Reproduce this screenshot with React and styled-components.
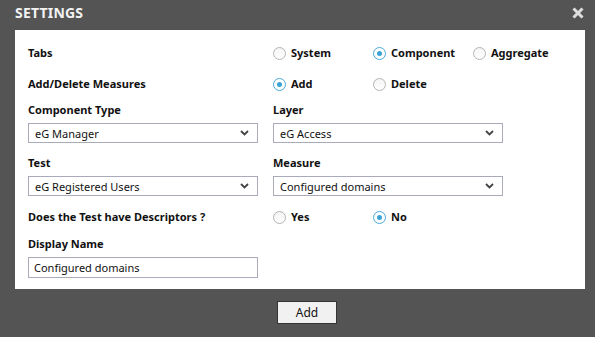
import styled, { createGlobalStyle } from "styled-components"
import { useState } from "react"

const GlobalStyle = createGlobalStyle`
  html, body {
    margin: 0;
    padding: 0;
    background: #545454;
  }
  body {
    font-family: 'Noto Sans', 'DejaVu Sans', sans-serif;
    font-size: 11px;
    color: #111;
  }
`

const Dialog = styled.div`
  width: 595px;
  height: 337px;
  background: #545454;
  box-sizing: border-box;
  padding: 0 10px 0 15px;
  display: flex;
  flex-direction: column;
`

const Header = styled.div`
  height: 30px;
  flex-shrink: 0;
  display: flex;
  align-items: center;
  justify-content: space-between;
`

const Title = styled.h1`
  margin: 0;
  font-size: 14px;
  font-weight: 700;
  color: #f2f2f2;
  letter-spacing: 0.2px;
  padding-bottom: 5px;
`

const CloseButton = styled.button`
  border: none;
  background: none;
  padding: 0;
  width: 14px;
  height: 14px;
  display: flex;
  align-items: center;
  justify-content: center;
  margin-bottom: 5px;
  cursor: pointer;
`

const Panel = styled.div`
  width: 570px;
  background: #fff;
  box-sizing: border-box;
  padding: 15px 13px 11px 13px;
  display: flex;
  flex-direction: column;
`

const Row = styled.div`
  display: grid;
  grid-template-columns: 245px 1fr;
  align-items: center;
  margin-top: ${props => props.gap || 0}px;
`

const RowLabel = styled.div`
  font-weight: 700;
  line-height: 16px;
`

const Options = styled.div`
  display: flex;
`

const Option = styled.label`
  width: 100px;
  flex-shrink: 0;
  display: flex;
  align-items: center;
  gap: 5px;
  font-weight: 700;
  line-height: 16px;
  cursor: pointer;
`

const RadioCircle = styled.span`
  width: 11px;
  height: 11px;
  border-radius: 50%;
  border: 1px solid ${props => (props.checked ? "#49a9d9" : "#b4b4b4")};
  background: ${props => (props.checked ? "#fff" : "linear-gradient(#f4f4f4, #fff)")};
  display: flex;
  align-items: center;
  justify-content: center;
  flex-shrink: 0;

  &::after {
    content: "";
    width: 5px;
    height: 5px;
    border-radius: 50%;
    background: ${props => (props.checked ? "#3aa3d6" : "transparent")};
  }
`

const Field = styled.div`
  display: flex;
  flex-direction: column;
  gap: 5px;
`

const FieldLabel = styled.div`
  font-weight: 700;
  line-height: 16px;
`

const SelectBox = styled.div`
  width: 230px;
  height: 20px;
  box-sizing: border-box;
  border: 1px solid #a9abba;
  background: #fff;
  display: flex;
  align-items: center;
  justify-content: space-between;
  padding: 0 8px 0 6px;
  cursor: pointer;
`

const TextInput = styled.input`
  width: 230px;
  height: 21px;
  box-sizing: border-box;
  border: 1px solid #a9abba;
  padding: 0 5px;
  font-family: 'Noto Sans', 'DejaVu Sans', sans-serif;
  font-size: 11px;
  color: #111;
  outline: none;
`

const Footer = styled.div`
  flex: 1;
  display: flex;
  justify-content: center;
  padding-top: 12px;
  padding-left: 14px;
`

const AddButton = styled.button`
  width: 60px;
  height: 23px;
  background: #f1f1f1;
  border: 1px solid #333;
  font-family: 'Noto Sans', 'DejaVu Sans', sans-serif;
  font-size: 12px;
  color: #111;
  padding: 0;
  cursor: pointer;
`

const Chevron = () => (
  <svg width="9" height="6" viewBox="0 0 9 6">
    <path d="M1 1 L4.5 4.5 L8 1" fill="none" stroke="#444" strokeWidth="1.8" />
  </svg>
)

const Radio = ({ label, checked, onClick }) => (
  <Option onClick={onClick}>
    <RadioCircle checked={checked} />
    {label}
  </Option>
)

const Select = ({ value }) => (
  <SelectBox>
    <span>{value}</span>
    <Chevron />
  </SelectBox>
)

const App = () => {
  const [tab, setTab] = useState("Component")
  const [mode, setMode] = useState("Add")
  const [desc, setDesc] = useState("No")
  const [name, setName] = useState("Configured domains")

  return (
    <>
      <GlobalStyle />
      <Dialog>
        <Header>
          <Title>SETTINGS</Title>
          <CloseButton aria-label="close">
            <svg width="12" height="12" viewBox="0 0 12 12">
              <path d="M1.5 1.5 L10.5 10.5 M10.5 1.5 L1.5 10.5" stroke="#dedede" strokeWidth="3" />
            </svg>
          </CloseButton>
        </Header>
        <Panel>
          <Row>
            <RowLabel>Tabs</RowLabel>
            <Options>
              {["System", "Component", "Aggregate"].map(t => (
                <Radio key={t} label={t} checked={tab === t} onClick={() => setTab(t)} />
              ))}
            </Options>
          </Row>
          <Row gap={15}>
            <RowLabel>Add/Delete Measures</RowLabel>
            <Options>
              {["Add", "Delete"].map(t => (
                <Radio key={t} label={t} checked={mode === t} onClick={() => setMode(t)} />
              ))}
            </Options>
          </Row>
          <Row gap={10}>
            <Field>
              <FieldLabel>Component Type</FieldLabel>
              <Select value="eG Manager" />
            </Field>
            <Field>
              <FieldLabel>Layer</FieldLabel>
              <Select value="eG Access" />
            </Field>
          </Row>
          <Row gap={12}>
            <Field>
              <FieldLabel>Test</FieldLabel>
              <Select value="eG Registered Users" />
            </Field>
            <Field>
              <FieldLabel>Measure</FieldLabel>
              <Select value="Configured domains" />
            </Field>
          </Row>
          <Row gap={13}>
            <RowLabel>Does the Test have Descriptors ?</RowLabel>
            <Options>
              {["Yes", "No"].map(t => (
                <Radio key={t} label={t} checked={desc === t} onClick={() => setDesc(t)} />
              ))}
            </Options>
          </Row>
          <Row gap={11}>
            <Field>
              <FieldLabel>Display Name</FieldLabel>
              <TextInput value={name} onChange={e => setName(e.target.value)} />
            </Field>
          </Row>
        </Panel>
        <Footer>
          <AddButton type="button">Add</AddButton>
        </Footer>
      </Dialog>
    </>
  )
}

export default App
